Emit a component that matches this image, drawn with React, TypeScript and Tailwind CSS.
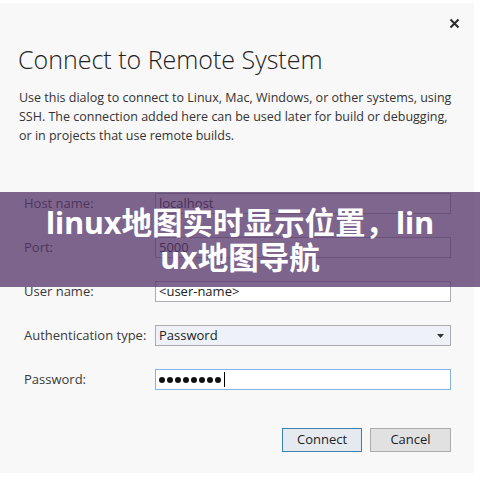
const font = { fontFamily: '"Open Sans", "Noto Sans", sans-serif' };

const Field = ({ label, children }: { label: string; children: React.ReactNode }) => {
  return (
    <div className="flex items-center h-[21px]">
      <div className="w-[131px] text-[13px] text-[#3a3a3a]">{label}</div>
      <div className="flex-1">{children}</div>
    </div>
  );
};

const App = () => {
  return (
    <div className="w-[480px] h-[480px] bg-white overflow-hidden relative" style={font}>
      <div className="w-[474px] h-[470px] mt-[3px] bg-[#f8f8f8] flex flex-col">
        <div className="flex justify-end pr-[14px] pt-[15px]">
          <svg width="11" height="11" viewBox="0 0 11 11">
            <path d="M1.5 1.5 L9.5 9.5 M9.5 1.5 L1.5 9.5" stroke="#2b2b2b" strokeWidth="2" />
          </svg>
        </div>
        <h1 className="ml-[18px] mt-[14px] text-[25px] leading-[32px] font-light text-[#222]">
          Connect to Remote System
        </h1>
        <p className="ml-[19px] mr-[22px] mt-[13px] text-[12.5px] leading-[19px] text-[#333]">
          Use this dialog to connect to Linux, Mac, Windows, or other systems, using SSH. The
          connection added here can be used later for build or debugging, or in projects that use
          remote builds.
        </p>
        <div className="ml-[24px] mr-[23px] mt-[48px] flex flex-col gap-[23px]">
          <Field label="Host name:">
            <div className="h-[21px] border border-[#abadb3] bg-white px-[3px] text-[13px] leading-[19px] text-[#222]">
              localhost
            </div>
          </Field>
          <Field label="Port:">
            <div className="h-[21px] border border-[#abadb3] bg-white px-[3px] text-[13px] leading-[19px] text-[#222]">
              5000
            </div>
          </Field>
          <Field label="User name:">
            <div className="h-[21px] border border-[#abadb3] bg-white px-[3px] text-[13px] leading-[19px] text-[#222]">
              &lt;user-name&gt;
            </div>
          </Field>
          <Field label="Authentication type:">
            <div className="h-[21px] border border-[#acacac] bg-[#eef2f8] pl-[3px] pr-[6px] flex items-center justify-between text-[13px] text-[#222]">
              <span>Password</span>
              <svg width="7" height="4" viewBox="0 0 7 4">
                <path d="M0 0 H7 L3.5 4 Z" fill="#333" />
              </svg>
            </div>
          </Field>
          <Field label="Password:">
            <div className="h-[21px] border border-[#7eb4ea] bg-white pl-[3px] flex items-center gap-[2px]">
              {[0, 1, 2, 3, 4, 5, 6, 7].map((i) => (
                <span key={i} className="w-[6px] h-[6px] rounded-full bg-[#111]" />
              ))}
              <span className="ml-[1px] w-px h-[15px] bg-black" />
            </div>
          </Field>
        </div>
        <div className="flex justify-end gap-[8px] mr-[23px] mt-[38px]">
          <button className="w-[80px] h-[24px] border border-[#3c7fb1] bg-[#e5eaf0] text-[13px] text-[#222]">
            Connect
          </button>
          <button className="w-[81px] h-[24px] border border-[#adadad] bg-[#e1e1e1] text-[13px] text-[#222]">
            Cancel
          </button>
        </div>
      </div>
      <div className="absolute left-0 top-[192px] w-[480px] h-[95px] bg-[#543368]/75 flex items-center justify-center">
        <div
          className="w-[390px] text-white font-bold text-[30.5px] leading-[35px] text-center break-all"
          style={{ fontFamily: '"Noto Sans", "Noto Sans CJK SC", sans-serif' }}
        >
          linux地图实时显示位置，linux地图导航
        </div>
      </div>
    </div>
  );
};

export default App;
